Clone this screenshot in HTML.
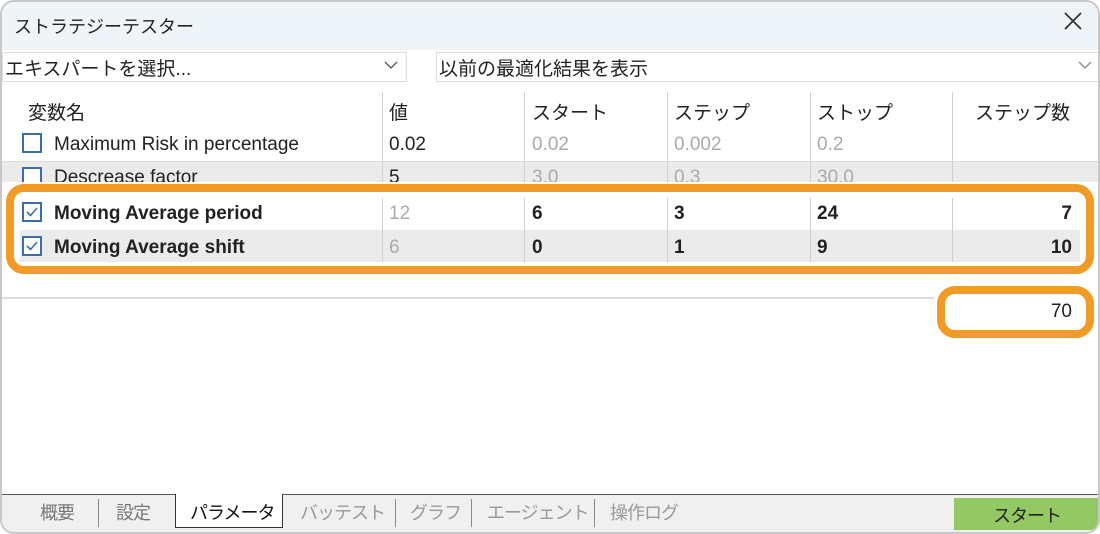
<!DOCTYPE html>
<html><head><meta charset="utf-8"><style>
*{box-sizing:border-box;margin:0;padding:0}
body{width:1100px;height:534px;background:#fff;font-family:"Liberation Sans","Noto Sans CJK JP",sans-serif;position:relative;overflow:hidden;color:#222}
.win{position:absolute;left:0;top:0;width:1100px;height:534px;border:2px solid #c8c8c8;border-radius:14px;overflow:hidden;background:#fff}
.title{position:absolute;left:0;top:0;right:0;height:48px;background:#eef4f8;font-size:18px;padding:11px 12px}
.x{position:absolute;right:16px;top:10px}
.dd{position:absolute;top:50px;height:30px;border:1px solid #ddd;background:#fff;font-size:19px;padding:1px 2px;color:#222}
.dd .ar{position:absolute;right:8px;top:8px}
.a{position:absolute;font-size:19px}
.b{font-weight:bold}
.g{color:#aaa}
.vl{position:absolute;width:1px;background:#d0d0d0}
.cb{position:absolute;width:20px;height:20px;border:2px solid #3a6ea8;background:#fff}
.ob{position:absolute;border:8px solid #f29a26;border-radius:18px}
.t{position:absolute;top:497px;font-size:18px;color:#777;letter-spacing:-1px}
</style></head><body><div class="win">
<div class="title">ストラテジーテスター<svg class="x" width="18" height="18" viewBox="0 0 18 18"><path d="M1 1L17 17M17 1L1 17" stroke="#333" stroke-width="1.8"/></svg></div>
<div class="dd" style="left:0;width:405px">エキスパートを選択...<svg class="ar" width="14" height="8" viewBox="0 0 14 8"><path d="M1 1L7 7L13 1" stroke="#555" fill="none" stroke-width="1.3"/></svg></div>
<div class="dd" style="left:434px;width:665px">以前の最適化結果を表示<svg class="ar" width="14" height="8" viewBox="0 0 14 8"><path d="M1 1L7 7L13 1" stroke="#888" fill="none" stroke-width="1.3"/></svg></div>
<!-- header -->
<div class="a" style="left:26px;top:96px">変数名</div>
<div class="a" style="left:387px;top:96px">値</div>
<div class="a" style="left:530px;top:96px">スタート</div>
<div class="a" style="left:672px;top:96px">ステップ</div>
<div class="a" style="left:815px;top:96px">ストップ</div>
<div class="a" style="right:28px;top:96px">ステップ数</div>
<div class="vl" style="left:380px;top:90px;height:70px"></div>
<div class="vl" style="left:522px;top:90px;height:70px"></div>
<div class="vl" style="left:665px;top:90px;height:70px"></div>
<div class="vl" style="left:808px;top:90px;height:70px"></div>
<div class="vl" style="left:950px;top:90px;height:70px"></div>
<!-- row1 -->
<div class="cb" style="left:20px;top:131px"></div>
<div class="a" style="left:52px;top:132px">Maximum Risk in percentage</div>
<div class="a" style="left:387px;top:132px">0.02</div>
<div class="a g" style="left:530px;top:132px">0.02</div>
<div class="a g" style="left:672px;top:132px">0.002</div>
<div class="a g" style="left:815px;top:132px">0.2</div>
<div style="position:absolute;left:0;top:159px;width:1098px;height:24px;background:#ebebeb;border-top:1px solid #ddd;overflow:hidden">
<div class="cb" style="left:20px;top:5px"></div>
<div class="a" style="left:52px;top:5px">Descrease factor</div>
<div class="a" style="left:387px;top:5px">5</div>
<div class="a g" style="left:530px;top:5px">3.0</div>
<div class="a g" style="left:672px;top:5px">0.3</div>
<div class="a g" style="left:815px;top:5px">30.0</div>
<div class="vl" style="left:380px;top:0;height:24px"></div>
<div class="vl" style="left:522px;top:0;height:24px"></div>
<div class="vl" style="left:665px;top:0;height:24px"></div>
<div class="vl" style="left:808px;top:0;height:24px"></div>
<div class="vl" style="left:950px;top:0;height:24px"></div>
</div>
<!-- highlighted -->
<div style="position:absolute;left:0;top:180px;width:1098px;height:100px;background:#fff"></div>
<div style="position:absolute;left:18px;top:228px;width:1060px;height:32px;background:#ebebeb"></div>
<div class="vl" style="left:380px;top:196px;height:64px"></div>
<div class="vl" style="left:522px;top:196px;height:64px"></div>
<div class="vl" style="left:665px;top:196px;height:64px"></div>
<div class="vl" style="left:808px;top:196px;height:64px"></div>
<div class="vl" style="left:950px;top:196px;height:64px"></div>
<div class="cb" style="left:20px;top:200px"><svg width="16" height="16" viewBox="0 0 16 16"><path d="M3 8L6.5 11.5L13 4" stroke="#3a6ea8" fill="none" stroke-width="1.6"/></svg></div>
<div class="a b" style="left:52px;top:201px">Moving Average period</div>
<div class="a g" style="left:387px;top:201px">12</div>
<div class="a b" style="left:530px;top:201px">6</div>
<div class="a b" style="left:672px;top:201px">3</div>
<div class="a b" style="left:815px;top:201px">24</div>
<div class="a b" style="right:26px;top:201px">7</div>
<div class="cb" style="left:20px;top:234px"><svg width="16" height="16" viewBox="0 0 16 16"><path d="M3 8L6.5 11.5L13 4" stroke="#3a6ea8" fill="none" stroke-width="1.6"/></svg></div>
<div class="a b" style="left:52px;top:235px">Moving Average shift</div>
<div class="a g" style="left:387px;top:235px">6</div>
<div class="a b" style="left:530px;top:235px">0</div>
<div class="a b" style="left:672px;top:235px">1</div>
<div class="a b" style="left:815px;top:235px">9</div>
<div class="a b" style="right:26px;top:235px">10</div>
<div class="ob" style="left:4px;top:182px;width:1088px;height:90px"></div>
<div style="position:absolute;left:0;top:295px;width:932px;height:2px;background:#ddd"></div>
<div class="ob" style="left:935px;top:284px;width:157px;height:52px"></div>
<div class="a" style="right:26px;top:299px">70</div>
<!-- tabs -->
<div style="position:absolute;left:0;top:492px;width:1100px;height:42px;background:#f0f0f0;border-top:1px solid #555"></div>
<div class="t" style="left:38px">概要</div>
<div class="vl" style="left:96px;top:497px;height:28px;background:#888"></div>
<div class="t" style="left:114px">設定</div>
<div style="position:absolute;left:173px;top:492px;width:108px;height:34px;background:#fff;border:1px solid #333;border-top:none"></div>
<div class="t" style="left:188px;color:#111">パラメータ</div>
<div class="t" style="left:298px;color:#999">バッテスト</div>
<div class="vl" style="left:393px;top:497px;height:28px;background:#888"></div>
<div class="t" style="left:408px;color:#999">グラフ</div>
<div class="vl" style="left:469px;top:497px;height:28px;background:#888"></div>
<div class="t" style="left:485px;color:#999">エージェント</div>
<div class="vl" style="left:592px;top:497px;height:28px;background:#888"></div>
<div class="t" style="left:608px;color:#999">操作ログ</div>
<div style="position:absolute;left:952px;top:496px;width:146px;height:32px;background:#93c862;font-size:18px;text-align:center;padding-top:4px;letter-spacing:-1px">スタート</div>
</div></body></html>
